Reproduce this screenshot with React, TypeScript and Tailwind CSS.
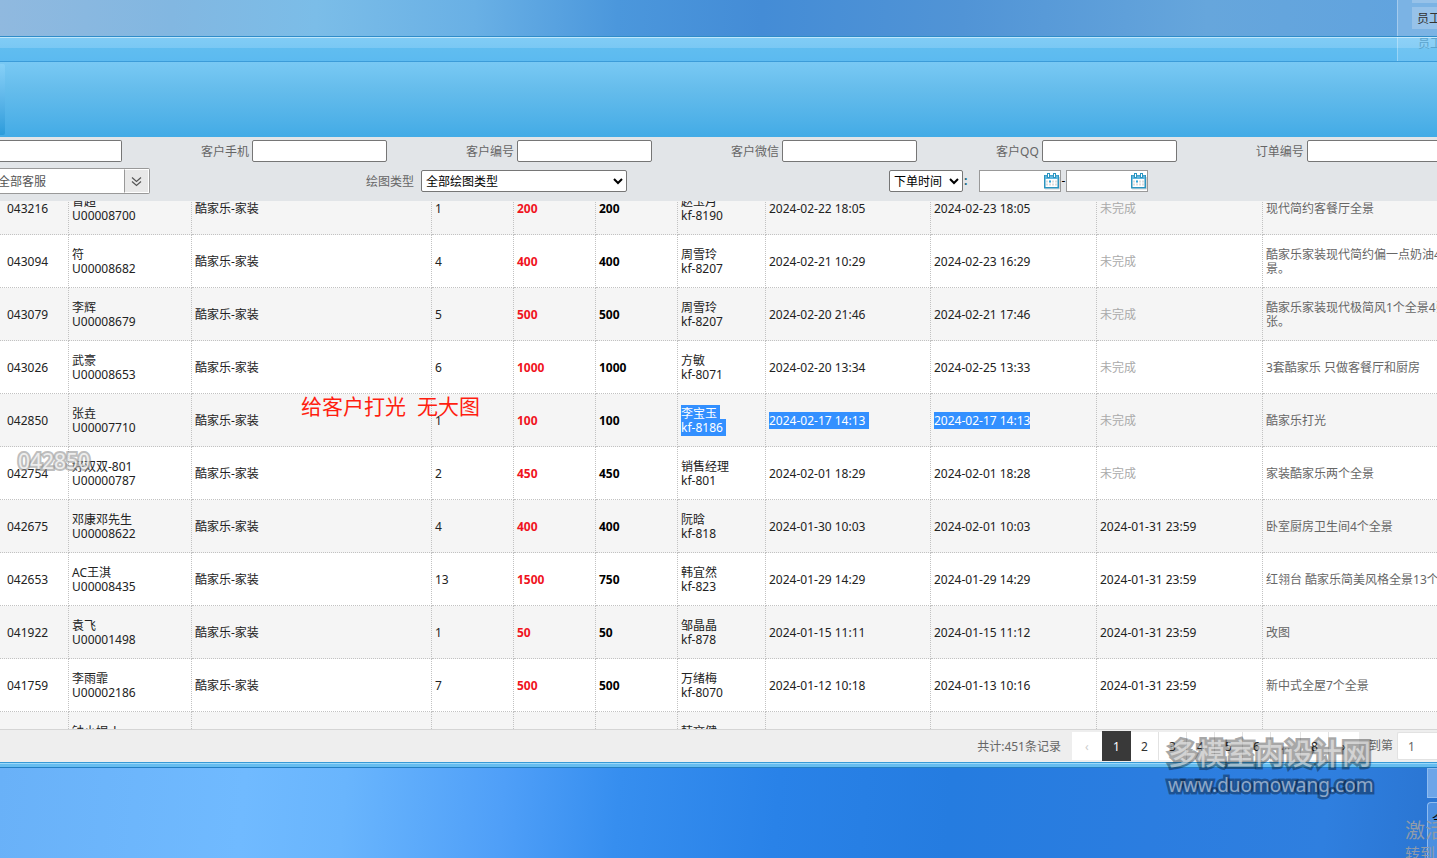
import type { ReactNode } from "react";

interface Order {
  id: string;
  customer: string;
  code: string;
  count: string;
  price: string;
  paid: string;
  staff: string;
  staffId: string;
  ordered: string;
  due: string;
  done?: string;
  note: string;
  selected?: boolean;
}

const orders: Order[] = [
  { id: "043216", customer: "晋超", code: "U00008700", count: "1", price: "200", paid: "200", staff: "赵玉月", staffId: "kf-8190", ordered: "2024-02-22 18:05", due: "2024-02-23 18:05", note: "现代简约客餐厅全景" },
  { id: "043094", customer: "符", code: "U00008682", count: "4", price: "400", paid: "400", staff: "周雪玲", staffId: "kf-8207", ordered: "2024-02-21 10:29", due: "2024-02-23 16:29", note: "酷家乐家装现代简约偏一点奶油4个\n景。" },
  { id: "043079", customer: "李辉", code: "U00008679", count: "5", price: "500", paid: "500", staff: "周雪玲", staffId: "kf-8207", ordered: "2024-02-20 21:46", due: "2024-02-21 17:46", note: "酷家乐家装现代极简风1个全景4张\n张。" },
  { id: "043026", customer: "武豪", code: "U00008653", count: "6", price: "1000", paid: "1000", staff: "方敏", staffId: "kf-8071", ordered: "2024-02-20 13:34", due: "2024-02-25 13:33", note: "3套酷家乐 只做客餐厅和厨房" },
  { id: "042850", customer: "张垚", code: "U00007710", count: "1", price: "100", paid: "100", staff: "李宝玉", staffId: "kf-8186", ordered: "2024-02-17 14:13", due: "2024-02-17 14:13", note: "酷家乐打光", selected: true },
  { id: "042754", customer: "好双双-801", code: "U00000787", count: "2", price: "450", paid: "450", staff: "销售经理", staffId: "kf-801", ordered: "2024-02-01 18:29", due: "2024-02-01 18:28", note: "家装酷家乐两个全景" },
  { id: "042675", customer: "邓康邓先生", code: "U00008622", count: "4", price: "400", paid: "400", staff: "阮晗", staffId: "kf-818", ordered: "2024-01-30 10:03", due: "2024-02-01 10:03", done: "2024-01-31 23:59", note: "卧室厨房卫生间4个全景" },
  { id: "042653", customer: "AC王淇", code: "U00008435", count: "13", price: "1500", paid: "750", staff: "韩宜然", staffId: "kf-823", ordered: "2024-01-29 14:29", due: "2024-01-29 14:29", done: "2024-01-31 23:59", note: "红翎台 酷家乐简美风格全景13个" },
  { id: "041922", customer: "袁飞", code: "U00001498", count: "1", price: "50", paid: "50", staff: "邹晶晶", staffId: "kf-878", ordered: "2024-01-15 11:11", due: "2024-01-15 11:12", done: "2024-01-31 23:59", note: "改图" },
  { id: "041759", customer: "李雨霏", code: "U00002186", count: "7", price: "500", paid: "500", staff: "万绪梅", staffId: "kf-8070", ordered: "2024-01-12 10:18", due: "2024-01-13 10:16", done: "2024-01-31 23:59", note: "新中式全屋7个全景" },
  { id: "041702", customer: "钟小妮_h", code: "U00002170", count: "2", price: "300", paid: "300", staff: "韩文健", staffId: "kf-825", ordered: "2024-01-11 16:20", due: "2024-01-12 16:20", done: "2024-01-31 23:59", note: "全景" },
];

const pages = ["2", "3", "4", "5", "6"];

const fieldCls = "h-[22px] w-[135px] shrink-0 rounded-xs border border-[#767676] bg-white px-1";
const selectCls = "h-[22px] shrink-0 rounded-xs border border-[#767676] bg-white text-black";
const cellCls = "border-r border-b border-dotted border-[#c2c2c2] p-0 pt-0.5 pl-[3px]";
const pageCls = "h-7 border-r border-[#e2e2e2] bg-white pt-0.5";

export default function App() {
  return (
    <div className="relative flex h-screen flex-col overflow-hidden bg-[#2a7fe2] font-['Noto_Sans','Noto_Sans_CJK_SC',sans-serif] text-xs/[14px] text-[#222]">
      <Desktop />
      <TitleBar />
      <div className="h-[75px] shrink-0 bg-linear-to-b from-[#79c9f4] via-[#66bdec] via-35% to-[#42abe6]">
        <div className="mt-0.5 h-[71px] w-[5px] rounded-r-xs bg-linear-to-b from-[#86d0f7] to-[#2a9cdb]" />
      </div>
      <Filters />
      <div className="min-h-0 flex-1 overflow-hidden bg-white">
        <OrderTable />
      </div>
      <Pager />
      <div className="h-1.5 shrink-0 border-y border-t-[#3799d6] border-b-[#247fc4] bg-[#66bdf0]">
        <div className="h-px bg-[#9bd9fa]" />
      </div>
      <DesktopBottom />

      <p className="absolute top-[392px] left-[301px] text-[21px]/7 whitespace-pre text-[#ff1e10]">给客户打光  无大图</p>
      <p className="absolute top-[447px] left-[18px] text-[21px]/7 text-white/75 [-webkit-text-stroke:4px_#8c8c8c90] [paint-order:stroke_fill]">042850</p>
      <div className="absolute top-[734px] left-[1168px] text-white/50 [-webkit-text-stroke:5px_#00000058] [paint-order:stroke_fill]">
        <p className="text-[29px]/10 font-medium">多模室内设计网</p>
        <p className="text-[19px]/[22px]">www.duomowang.com</p>
      </div>
      <div className="absolute right-0 bottom-0 h-[38px] w-8 overflow-hidden whitespace-nowrap text-[#8f9baa]">
        <p className="text-xl/[22px]">激活</p>
        <p className="text-[15px]/[22px]">转到</p>
      </div>
    </div>
  );
}

function Desktop() {
  return (
    <div className="flex h-9 shrink-0 justify-end bg-[linear-gradient(92deg,#90b9df_0%,#82b7e1_12%,#7bbde8_22%,#69b0e5_33%,#4b97dc_43%,#448cd6_53%,#5194d6_67%,#66a6dc_84%,#60a3df_100%)]">
      <div className="flex w-10 flex-col items-end gap-1 border-l border-[#a5cbed] bg-[#7bb3e4]">
        <div className="h-[3px] w-[25px] bg-[#97c2e9]" />
        <div className="h-[22px] w-[25px] overflow-hidden bg-[#97c2e9] pl-[5px] leading-6 whitespace-nowrap text-[#333]">员工</div>
      </div>
    </div>
  );
}

function TitleBar() {
  return (
    <div className="flex h-[26px] shrink-0 justify-end border-y border-t-[#2f8cc9] border-b-[#3c9cd9] bg-[linear-gradient(#c0e7fb_1px,#80ccf6_1px,#7ac8f4_11px,#60bdf0_11px,#5cbaf0_100%)]">
      <div className="w-10 overflow-hidden border-l border-white/30 bg-white/10 pl-5 leading-[13px] whitespace-nowrap text-[#5ba4cd]">员工</div>
    </div>
  );
}

function Field({ id, label }: { id: string; label: string }) {
  return (
    <div className="flex shrink-0 items-center gap-[3px]">
      <label htmlFor={id} className="pt-0.5">{label}</label>
      <input id={id} type="text" className={fieldCls} />
    </div>
  );
}

function Filters() {
  return (
    <form className="h-16 shrink-0 overflow-hidden bg-[#e2e5e8] pt-[3px] text-[#666]">
      <div className="flex items-center gap-[79px]">
        <input aria-label="客户姓名" type="text" className="h-[22px] w-[122px] shrink-0 rounded-r-xs border border-l-0 border-[#767676] bg-white px-1" />
        <Field id="phone" label="客户手机" />
        <Field id="code" label="客户编号" />
        <Field id="wechat" label="客户微信" />
        <Field id="qq" label="客户QQ" />
        <Field id="order" label="订单编号" />
      </div>
      <div className="mt-1.5 flex items-center">
        <div className="flex h-[26px] w-[150px] shrink-0 rounded-r-xs border border-l-0 border-[#999] bg-white">
          <input aria-label="客服" type="text" defaultValue="全部客服" className="-ml-0.5 min-w-0 flex-1 bg-white pt-0.5 text-[#555]" />
          <button type="button" aria-label="选择客服" className="flex w-[25px] items-center justify-center border border-white border-l-[#999] bg-[#e8e8e8]">
            <svg width="11" height="11" viewBox="0 0 11 11" fill="none" stroke="#555" strokeWidth="1.2">
              <path d="M1 1.5l4.5 4 4.5-4M1 5.5l4.5 4 4.5-4" />
            </svg>
          </button>
        </div>
        <label htmlFor="type" className="ml-[216px] shrink-0 pt-0.5">绘图类型</label>
        <select id="type" className={`${selectCls} ml-[7px] w-[206px]`}>
          <option>全部绘图类型</option>
        </select>
        <select aria-label="时间类型" className={`${selectCls} ml-[262px] w-[74px]`}>
          <option>下单时间</option>
        </select>
        <span className="w-4 shrink-0 pl-px font-bold text-[#17677f]">:</span>
        <DateField label="开始日期" />
        <span className="w-[5px] shrink-0 text-center text-black">-</span>
        <DateField label="结束日期" />
      </div>
    </form>
  );
}

function DateField({ label }: { label: string }) {
  return (
    <div className="flex h-[22px] w-[82px] shrink-0 items-center border border-[#999] bg-white">
      <input aria-label={label} type="text" className="min-w-0 flex-1" />
      <svg width="16" height="17" viewBox="0 0 16 17">
        <path d="M1 16h14.500V4" fill="none" stroke="#d5d5d5" />
        <path d="M.75 2.75h13.500v12H.75z" fill="#fff" stroke="#2b94c0" strokeWidth="1.5" />
        <path d="M1 2.500h13V6H1z" fill="#5fb6de" />
        <path d="M4.500 0v5M10.500 0v5" stroke="#2b94c0" strokeWidth="3" />
        <path d="M4.500 1v3M10.500 1v3" stroke="#fff" />
        <path d="M2 8.500h11M2 11.500h11" stroke="#ddd" strokeWidth="2" strokeDasharray="2 1" />
        <path d="M5 7.500h2v2H5z" fill="#2ba5dc" />
      </svg>
    </div>
  );
}

function Mark({ on, children }: { on?: boolean; children: ReactNode }) {
  return on ? <mark className="bg-[#3390ff] text-white">{children}</mark> : <>{children}</>;
}

function OrderTable() {
  return (
    <table className="-mt-[19px] w-full table-fixed border-separate border-spacing-0 text-left">
      <colgroup>
        <col className="w-[69px]" />
        <col className="w-[123px]" />
        <col className="w-60" />
        <col className="w-[82px]" />
        <col className="w-[82px]" />
        <col className="w-[82px]" />
        <col className="w-[88px]" />
        <col className="w-[165px]" />
        <col className="w-[166px]" />
        <col className="w-[166px]" />
        <col />
      </colgroup>
      <tbody>
        {orders.map((o) => (
          <tr key={o.id} className="h-[53px] odd:bg-[#f5f5f5]">
            <td className="border-r border-b border-dotted border-[#c2c2c2] p-0 pt-0.5 pl-[7px]">{o.id}</td>
            <td className={cellCls}>{o.customer}<br />{o.code}</td>
            <td className={cellCls}>酷家乐-家装</td>
            <td className={cellCls}>{o.count}</td>
            <td className={`${cellCls} font-bold text-[#f0141e]`}>{o.price}</td>
            <td className={`${cellCls} font-bold text-black`}>{o.paid}</td>
            <td className={cellCls}>
              <Mark on={o.selected}>{o.staff}&nbsp;</Mark><br />
              <Mark on={o.selected}>{o.staffId}&nbsp;</Mark>
            </td>
            <td className={cellCls}><Mark on={o.selected}>{o.ordered}&nbsp;</Mark></td>
            <td className={cellCls}><Mark on={o.selected}>{o.due}</Mark></td>
            <td className={cellCls}>{o.done ?? <span className="text-[#aaa]">未完成</span>}</td>
            <td className="overflow-hidden border-b border-dotted border-[#c2c2c2] p-0 pt-0.5 pl-[3px] whitespace-pre text-[#666]">{o.note}</td>
          </tr>
        ))}
      </tbody>
    </table>
  );
}

function Pager() {
  return (
    <nav className="flex h-[33px] shrink-0 items-center justify-end border-t border-[#d5d5d5] bg-[#eee] text-[#333]">
      <span className="mr-[11px] pt-0.5 text-[#666]">共计:451条记录</span>
      <button type="button" aria-label="上一页" className="h-7 w-[30px] bg-white pt-0.5 text-[#ccc]">‹</button>
      <button type="button" aria-current="page" className="h-[30px] w-[29px] bg-[#393939] pt-0.5 text-white">1</button>
      {pages.map((p) => (
        <button key={p} type="button" className={`${pageCls} w-7`}>{p}</button>
      ))}
      <span className={`${pageCls} w-[30px] text-center leading-6 text-[#999]`}>…</span>
      <button type="button" className={`${pageCls} w-7`}>8</button>
      <button type="button" aria-label="下一页" className="h-7 w-[30px] bg-white pt-0.5">›</button>
      <label htmlFor="page" className="mr-1 ml-2.5 text-[#666]">到第</label>
      <input id="page" type="text" defaultValue="1" className="h-7 w-10 rounded-l-xs border border-r-0 border-[#e2e2e2] bg-white pl-2.5 text-[#666]" />
    </nav>
  );
}

function DesktopBottom() {
  return (
    <div className="flex h-[90px] shrink-0 justify-end bg-[linear-gradient(95deg,#69b1f8_0%,#70baff_17%,#69b5fd_24%,#4f9ff8_35%,#368eef_43%,#2982e8_54%,#257ce0_66%,#2b7de0_80%,#2f7fdf_92%,#2a75d2_100%)]">
      <div className="flex w-2.5 flex-col gap-1">
        <div className="h-[30px] border border-r-0 border-[#8fbcf0] bg-[#6da5e8]" />
        <div className="flex-1 overflow-hidden rounded-tl-sm border border-r-0 border-b-0 border-[#8fbcf0] bg-[#4c8fe0] pt-2.5 pl-1 whitespace-nowrap text-black">
          今
        </div>
      </div>
    </div>
  );
}
